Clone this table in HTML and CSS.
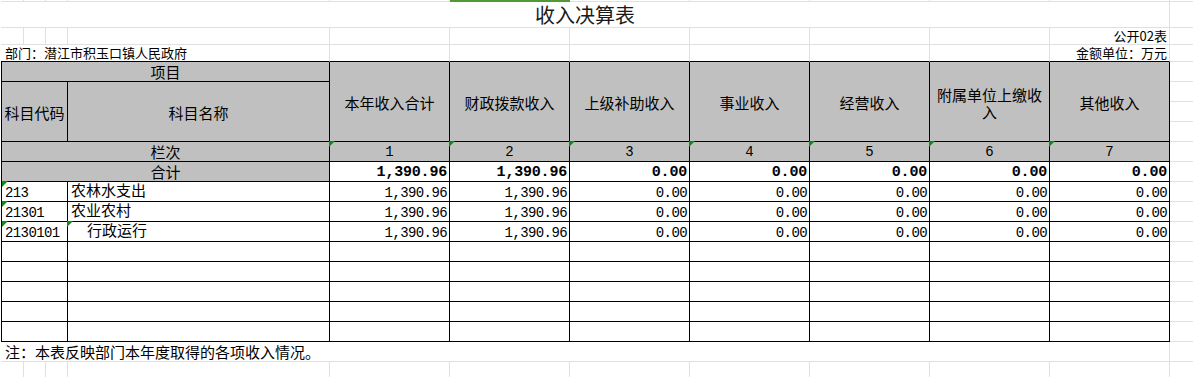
FILE: index.html
```html
<!DOCTYPE html>
<html lang="zh-CN">
<head>
<meta charset="utf-8">
<title>收入决算表</title>
<link rel="stylesheet" href="styles.css">
</head>
<body>
<div class="select-bar"></div>
<table class="sheet">
  <colgroup>
    <col class="c-a"><col class="c-b"><col class="c-c"><col class="c-d">
    <col class="c-n"><col class="c-n"><col class="c-n"><col class="c-n"><col class="c-n"><col class="c-n"><col class="c-n">
    <col class="c-l">
  </colgroup>
  <tr class="r-cut">
    <td></td><td></td><td></td><td></td><td></td><td></td><td></td><td></td><td></td><td></td><td></td><td class="l"></td>
  </tr>
  <tr class="r-title">
    <td colspan="11" class="title">收入决算表</td><td class="l"></td>
  </tr>
  <tr class="r-info">
    <td></td><td></td><td></td><td></td><td></td><td></td><td></td><td></td><td></td><td></td><td class="info-r">公开02表</td><td class="l"></td>
  </tr>
  <tr class="r-info r-top">
    <td colspan="4" class="info-l">部门：潜江市积玉口镇人民政府</td><td></td><td></td><td></td><td></td><td></td><td></td><td class="info-r">金额单位：万元</td><td class="l"></td>
  </tr>
  <tr class="r20">
    <td colspan="4" class="t hd first">项目</td>
    <td rowspan="4" class="t hd big">本年收入合计</td>
    <td rowspan="4" class="t hd big">财政拨款收入</td>
    <td rowspan="4" class="t hd big">上级补助收入</td>
    <td rowspan="4" class="t hd big">事业收入</td>
    <td rowspan="4" class="t hd big">经营收入</td>
    <td rowspan="4" class="t hd big wrap">附属单位上缴收入</td>
    <td rowspan="4" class="t hd big">其他收入</td>
    <td class="l"></td>
  </tr>
  <tr class="r20">
    <td colspan="3" rowspan="3" class="t hd first sub">科目代码</td>
    <td rowspan="3" class="t hd sub">科目名称</td>
    <td class="l"></td>
  </tr>
  <tr class="r20"><td class="l"></td></tr>
  <tr class="r20"><td class="l"></td></tr>
  <tr class="r20">
    <td colspan="4" class="t hd first">栏次</td>
    <td class="t hd idx flag">1</td><td class="t hd idx flag">2</td><td class="t hd idx flag">3</td><td class="t hd idx flag">4</td><td class="t hd idx flag">5</td><td class="t hd idx flag">6</td><td class="t hd idx flag">7</td>
    <td class="l"></td>
  </tr>
  <tr class="r20">
    <td colspan="4" class="t hd first">合计</td>
    <td class="t num b">1,390.96</td><td class="t num b">1,390.96</td><td class="t num b">0.00</td><td class="t num b">0.00</td><td class="t num b">0.00</td><td class="t num b">0.00</td><td class="t num b">0.00</td>
    <td class="l"></td>
  </tr>
  <tr class="r20">
    <td colspan="3" class="t first code flag">213</td><td class="t name">农林水支出</td>
    <td class="t num">1,390.96</td><td class="t num">1,390.96</td><td class="t num">0.00</td><td class="t num">0.00</td><td class="t num">0.00</td><td class="t num">0.00</td><td class="t num">0.00</td>
    <td class="l"></td>
  </tr>
  <tr class="r20">
    <td colspan="3" class="t first code flag">21301</td><td class="t name">农业农村</td>
    <td class="t num">1,390.96</td><td class="t num">1,390.96</td><td class="t num">0.00</td><td class="t num">0.00</td><td class="t num">0.00</td><td class="t num">0.00</td><td class="t num">0.00</td>
    <td class="l"></td>
  </tr>
  <tr class="r20">
    <td colspan="3" class="t first code flag">2130101</td><td class="t name indent flag">行政运行</td>
    <td class="t num">1,390.96</td><td class="t num">1,390.96</td><td class="t num">0.00</td><td class="t num">0.00</td><td class="t num">0.00</td><td class="t num">0.00</td><td class="t num">0.00</td>
    <td class="l"></td>
  </tr>
  <tr class="r20"><td colspan="3" class="t first"></td><td class="t"></td><td class="t"></td><td class="t"></td><td class="t"></td><td class="t"></td><td class="t"></td><td class="t"></td><td class="t"></td><td class="l"></td></tr>
  <tr class="r20"><td colspan="3" class="t first"></td><td class="t"></td><td class="t"></td><td class="t"></td><td class="t"></td><td class="t"></td><td class="t"></td><td class="t"></td><td class="t"></td><td class="l"></td></tr>
  <tr class="r20"><td colspan="3" class="t first"></td><td class="t"></td><td class="t"></td><td class="t"></td><td class="t"></td><td class="t"></td><td class="t"></td><td class="t"></td><td class="t"></td><td class="l"></td></tr>
  <tr class="r20"><td colspan="3" class="t first"></td><td class="t"></td><td class="t"></td><td class="t"></td><td class="t"></td><td class="t"></td><td class="t"></td><td class="t"></td><td class="t"></td><td class="l"></td></tr>
  <tr class="r20"><td colspan="3" class="t first"></td><td class="t"></td><td class="t"></td><td class="t"></td><td class="t"></td><td class="t"></td><td class="t"></td><td class="t"></td><td class="t"></td><td class="l"></td></tr>
  <tr class="r20">
    <td colspan="11" class="note">注：本表反映部门本年度取得的各项收入情况。</td><td class="l"></td>
  </tr>
  <tr class="r-end">
    <td></td><td></td><td></td><td></td><td></td><td></td><td></td><td></td><td></td><td></td><td></td><td class="l"></td>
  </tr>
</table>
</body>
</html>
```

FILE: styles.css
```css
:root {
  --grid: #e0e0e0;
  --line: #000000;
  --head: #c0c0c0;
  --flag: #0f8a16;
}

html, body {
  margin: 0;
  padding: 0;
  background: #ffffff;
  overflow: hidden;
}

body {
  position: relative;
  width: 1193px;
  height: 377px;
  font-family: "Noto Sans CJK SC", "Noto Sans", sans-serif;
  color: #000;
}

.select-bar {
  position: absolute;
  left: 450px;
  top: 0;
  width: 120px;
  height: 2px;
  background: #4f9a35;
  z-index: 2;
}

.sheet {
  border-collapse: separate;
  border-spacing: 0;
  table-layout: fixed;
  width: 1192px;
  margin-left: 1px;
}

.c-a { width: 23px; }
.c-b { width: 22px; }
.c-c { width: 22px; }
.c-d { width: 262px; }
.c-n { width: 120px; }
.c-l { width: 23px; }

.sheet td {
  box-sizing: border-box;
  padding: 0;
  border-right: 1px solid var(--grid);
  border-bottom: 1px solid var(--grid);
  font-size: 15px;
  line-height: 18px;
  white-space: nowrap;
  overflow: visible;
}

.sheet td.l { border-right: none; }

.r-cut { height: 2px; }
.r-title { height: 26px; }
.r-info { height: 17px; }
.r20 { height: 20px; }
.r-end { height: 16px; }

.r-top td { border-bottom-color: var(--line); }
.r-top td.l { border-bottom-color: var(--grid); }

.sheet td.title {
  text-align: center;
  font-size: 20px;
  line-height: 24px;
  vertical-align: bottom;
  color: #1a1a1a;
}

.sheet td.info-r,
.sheet td.info-l {
  font-size: 13px;
  line-height: 16px;
  vertical-align: bottom;
}
.sheet td.info-r { text-align: right; padding-right: 2px; }
.sheet td.info-l { padding-left: 4px; }

.sheet td.t {
  border-right-color: var(--line);
  border-bottom-color: var(--line);
}
.sheet td.first { border-left: 1px solid var(--line); }

.sheet td.hd {
  background: var(--head);
  text-align: center;
  vertical-align: middle;
}
.sheet td.big { padding-top: 3px; }
.sheet td.sub { padding-top: 2px; }
.sheet td.wrap {
  white-space: normal;
  padding-left: 6px;
  padding-right: 6px;
  line-height: 17px;
}
.sheet td.idx {
  font-family: "Liberation Mono", monospace;
  font-size: 14px;
}

.sheet td.num,
.sheet td.code {
  font-family: "Liberation Mono", monospace;
  font-size: 14px;
  letter-spacing: -0.6px;
  line-height: 15px;
  vertical-align: top;
  padding-top: 4px;
}
.sheet td.num {
  text-align: right;
  padding-right: 2px;
}
.sheet td.num.b {
  font-weight: bold;
  font-size: 15px;
  letter-spacing: -0.2px;
  padding-top: 3px;
}
.sheet td.code { padding-left: 3px; }

.sheet td.name {
  padding-left: 3px;
  line-height: 16px;
  vertical-align: top;
}
.sheet td.indent { padding-left: 19px; }

.flag { position: relative; }
.flag::before {
  content: "";
  position: absolute;
  left: -1px;
  top: -1px;
  width: 0;
  height: 0;
  border-top: 6px solid var(--flag);
  border-right: 6px solid transparent;
}
.code.flag::before { left: 0; }

.sheet td.note {
  padding-left: 4px;
  vertical-align: bottom;
}
```
